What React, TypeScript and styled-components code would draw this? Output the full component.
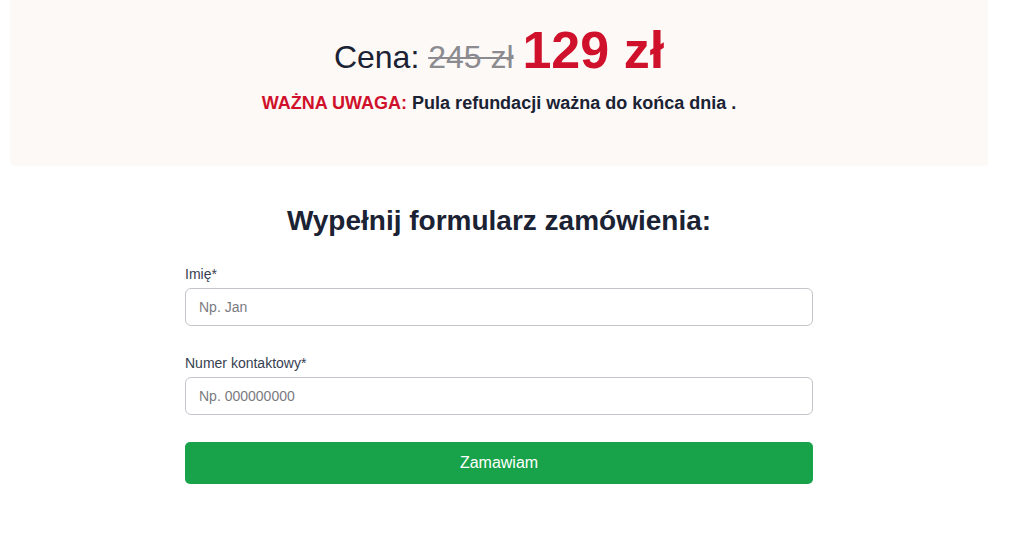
import styled, { createGlobalStyle } from 'styled-components';

const GlobalStyle = createGlobalStyle`
  body {
    margin: 0;
    background: #fff;
    font-family: 'Liberation Sans', Arial, sans-serif;
    color: #1a2233;
  }
`;

export default function App() {
  return (
    <>
      <GlobalStyle />
      <Page>
        <PricePanel>
          <PriceLine>
            <PriceLabel>Cena:</PriceLabel> <OldPrice>245 zł</OldPrice>{' '}
            <NewPrice>129 zł</NewPrice>
          </PriceLine>
          <Notice>
            <NoticeTag>WAŻNA UWAGA:</NoticeTag> Pula refundacji ważna do końca dnia .
          </Notice>
        </PricePanel>

        <OrderForm onSubmit={(e) => e.preventDefault()}>
          <FormHeading>Wypełnij formularz zamówienia:</FormHeading>
          <Field>
            <FieldLabel htmlFor='name'>Imię*</FieldLabel>
            <TextInput id='name' type='text' placeholder='Np. Jan' />
          </Field>
          <Field>
            <FieldLabel htmlFor='phone'>Numer kontaktowy*</FieldLabel>
            <TextInput id='phone' type='tel' placeholder='Np. 000000000' />
          </Field>
          <SubmitButton type='submit'>Zamawiam</SubmitButton>
        </OrderForm>
      </Page>
    </>
  );
}

const Page = styled.main`
  width: 978px;
  margin-left: 10px;
  display: flex;
  flex-direction: column;
  align-items: center;
`;

const PricePanel = styled.section`
  box-sizing: border-box;
  width: 100%;
  height: 166px;
  padding-top: 19px;
  background: #fdf9f7;
  border-radius: 0 0 4px 4px;
  text-align: center;
`;

const PriceLine = styled.div`
  font-size: 32px;
  line-height: 62px;
  white-space: nowrap;
`;

const PriceLabel = styled.span`
  color: #1a2233;
`;

const OldPrice = styled.span`
  color: #8b8b90;
  text-decoration: line-through;
  text-decoration-thickness: 2px;
`;

const NewPrice = styled.span`
  color: #d0112b;
  font-size: 52px;
  font-weight: 700;
`;

const Notice = styled.p`
  margin: 2px 0 0;
  font-size: 18px;
  line-height: 27px;
  font-weight: 700;
  color: #1a2233;
`;

const NoticeTag = styled.span`
  color: #d0112b;
`;

const OrderForm = styled.form`
  width: 628px;
  margin-top: 38px;
  display: flex;
  flex-direction: column;
`;

const FormHeading = styled.h2`
  margin: 0 0 26px;
  font-size: 28px;
  line-height: 34px;
  font-weight: 700;
  text-align: center;
  color: #1a2233;
`;

const Field = styled.div`
  display: flex;
  flex-direction: column;
  gap: 4px;
  margin-bottom: 27px;
`;

const FieldLabel = styled.label`
  font-size: 14px;
  line-height: 20px;
  color: #374151;
`;

const TextInput = styled.input`
  box-sizing: border-box;
  height: 38px;
  padding: 0 13px;
  border: 1px solid #c4c5ca;
  border-radius: 6px;
  font-family: inherit;
  font-size: 14px;
  color: #1a2233;
  background: #fff;
  outline: none;

  &::placeholder {
    color: #7a7a7f;
  }
`;

const SubmitButton = styled.button`
  height: 42px;
  border: none;
  border-radius: 5px;
  background: #18a34a;
  color: #fff;
  font-family: inherit;
  font-size: 16px;
  cursor: pointer;
`;
